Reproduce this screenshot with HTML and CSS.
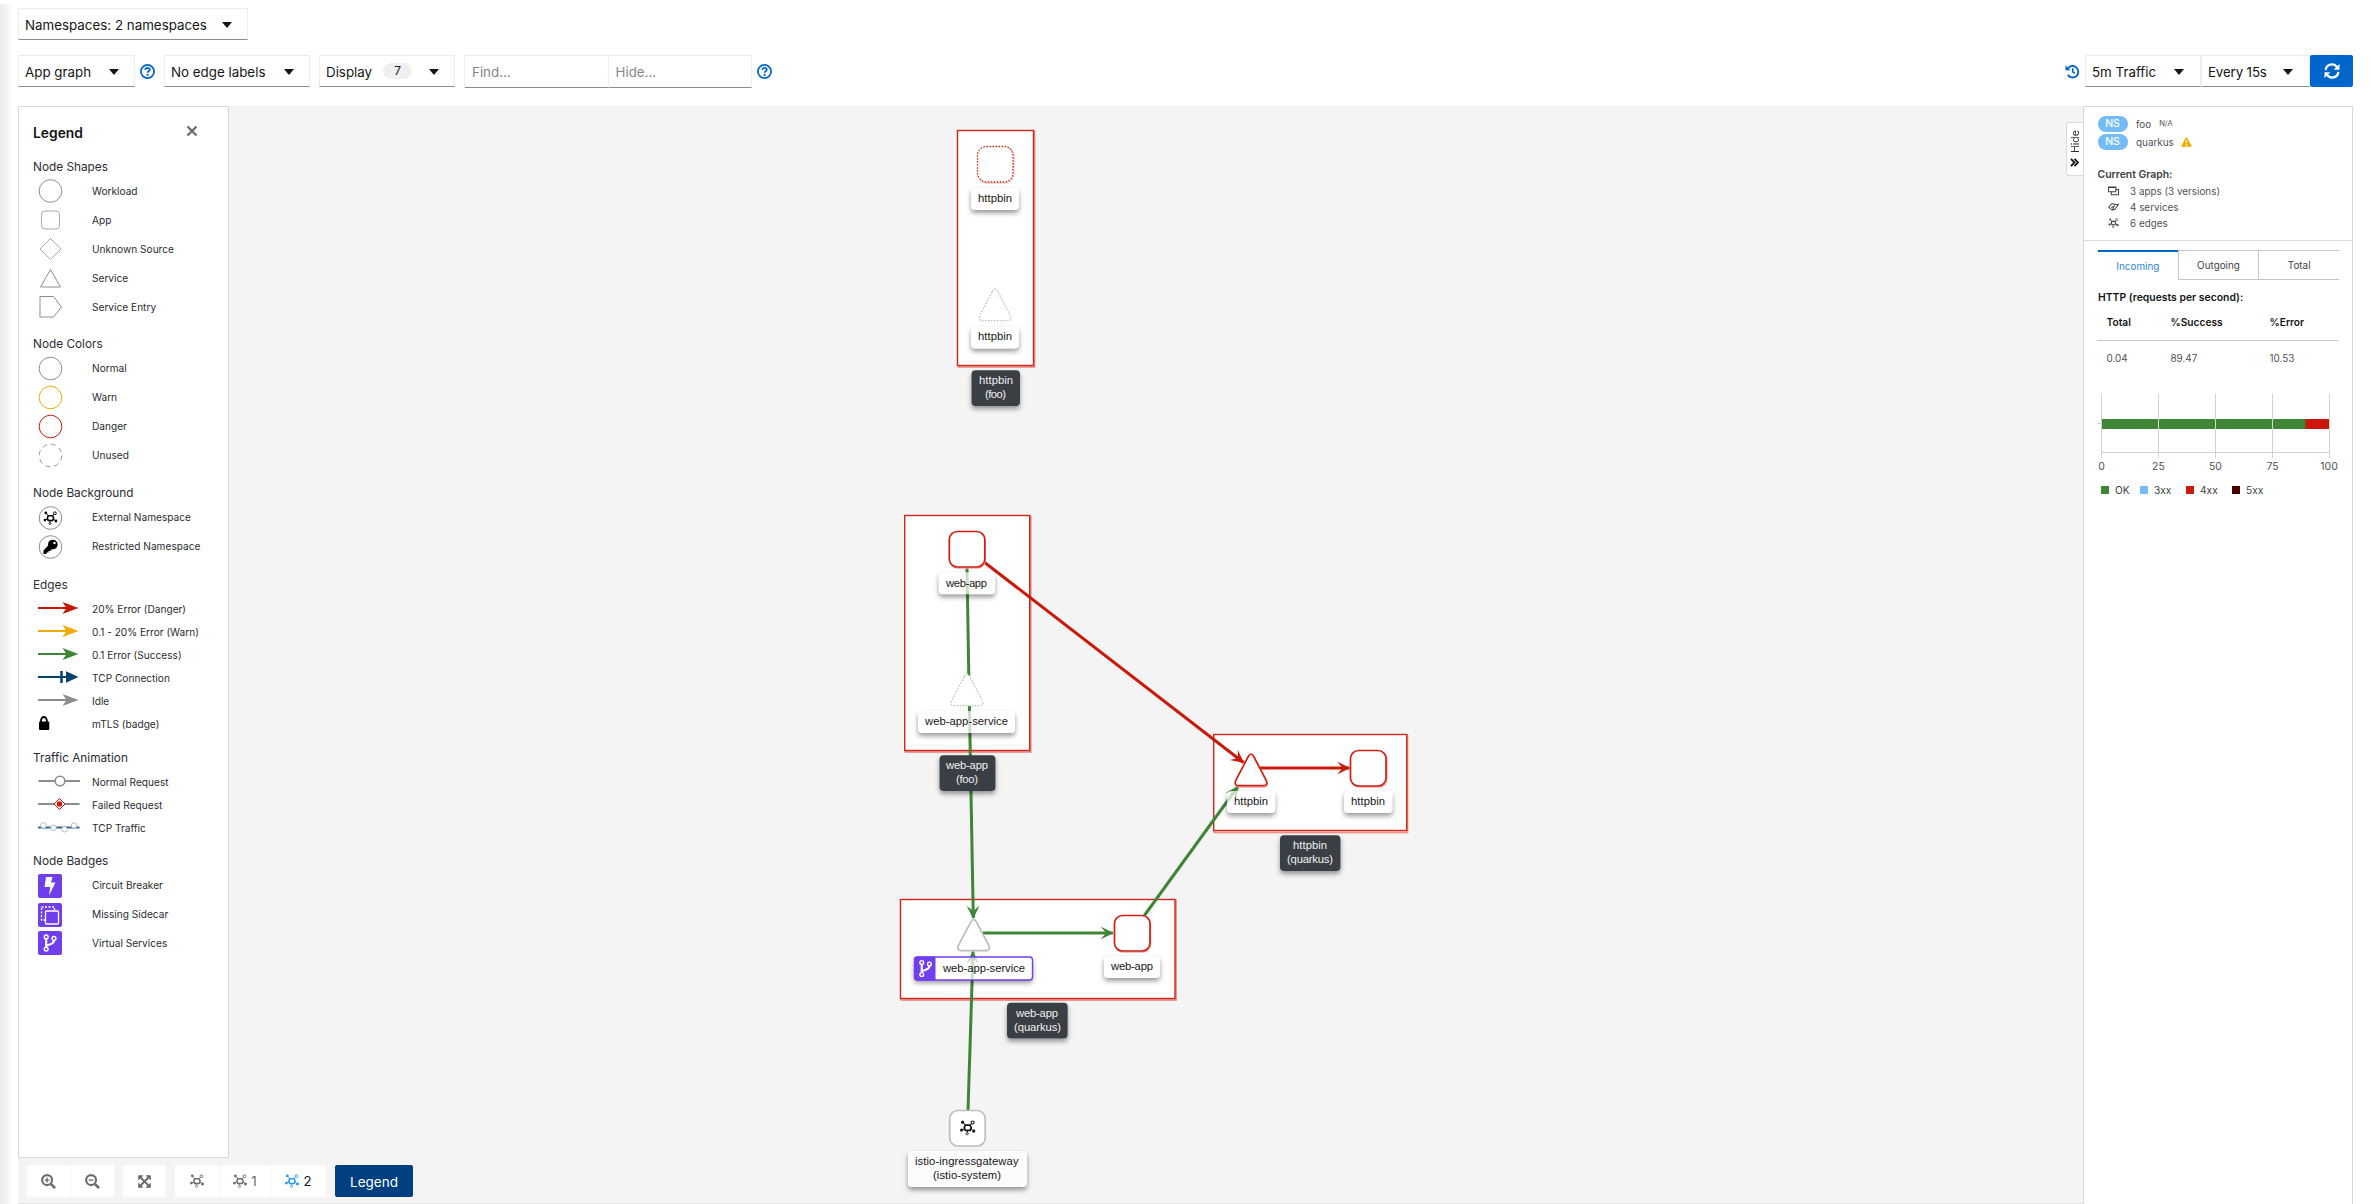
FILE: index.html
```html
<!DOCTYPE html>
<html lang="en">
<head>
<meta charset="utf-8">
<title>Kiali Graph</title>
<link rel="stylesheet" href="styles.css">
</head>
<body>
<svg class="defs" aria-hidden="true">
  <defs>
    <symbol id="topology" viewBox="0 0 16 16">
      <path d="M3.2 2.6 5.8 5.6M12.4 3.4 10.2 5.8M2 10.2 5 9M14 11 11 9.4M7.6 11V13" fill="none" stroke="currentColor" stroke-width="1"/>
      <path d="M5.4 5.4H10.4L11.6 8 10.4 10.8H5.4L4.4 8Z" fill="none" stroke="currentColor" stroke-width="1.8"/>
      <circle cx="2.7" cy="2.2" r="1.6" fill="currentColor"/>
      <circle cx="1.6" cy="10.4" r="1.6" fill="currentColor"/>
      <circle cx="14.3" cy="11.4" r="1.7" fill="currentColor"/>
      <circle cx="13" cy="2.6" r="1.6" fill="none" stroke="currentColor" stroke-width="1.1"/>
      <circle cx="7.4" cy="14.2" r="1.2" fill="none" stroke="currentColor" stroke-width=".9"/>
    </symbol>
    <symbol id="help" viewBox="0 0 16 16">
      <circle cx="8" cy="8" r="7" fill="none" stroke="currentColor" stroke-width="1.9"/>
      <path d="M5.6 6.3C5.8 4.7 6.8 4.1 8 4.1 9.4 4.1 10.4 4.9 10.4 6.1 10.4 7.8 8.1 7.7 8.1 9.4" fill="none" stroke="currentColor" stroke-width="1.9"/>
      <circle cx="8.1" cy="11.7" r="1.2" fill="currentColor"/>
    </symbol>
    <symbol id="branch" viewBox="0 0 16 20">
      <circle cx="4" cy="3.6" r="2" fill="none" stroke="#fff" stroke-width="1.5"/>
      <circle cx="4" cy="16.4" r="2" fill="none" stroke="#fff" stroke-width="1.5"/>
      <circle cx="12.2" cy="5.2" r="2" fill="none" stroke="#fff" stroke-width="1.5"/>
      <path d="M4 5.8V14.2M12.2 7.4C12.2 11.4 7.6 11 4.6 12.8" fill="none" stroke="#fff" stroke-width="2.2"/>
    </symbol>
    <symbol id="arrow" viewBox="0 0 42 14">
      <path d="M0 7H30" stroke="currentColor" stroke-width="2"/>
      <path d="M24.5 1 40.5 7 24.5 13 28.5 7Z" fill="currentColor"/>
    </symbol>
    <marker id="tip-red" viewBox="0 0 12 12" markerWidth="13" markerHeight="14" refX="11.4" refY="6" orient="auto" markerUnits="userSpaceOnUse"><path d="M0 0 12 6 0 12 5 6Z" fill="#c9190b"/></marker>
    <marker id="tip-green" viewBox="0 0 12 12" markerWidth="13" markerHeight="14" refX="11.4" refY="6" orient="auto" markerUnits="userSpaceOnUse"><path d="M0 0 12 6 0 12 5 6Z" fill="#3e8635"/></marker>
    <filter id="lift" x="-20%" y="-30%" width="140%" height="190%">
      <feGaussianBlur in="SourceAlpha" stdDeviation="2.6"/>
      <feOffset dy="3" result="blur"/>
      <feFlood flood-color="#000" flood-opacity=".4"/>
      <feComposite in2="blur" operator="in"/>
      <feComposite in2="SourceAlpha" operator="out"/>
    </filter>
    <g id="light-labels">
      <rect x="971" y="188" width="48" height="22" rx="4"/><rect x="971" y="326.7" width="48" height="21.8" rx="4"/>
      <rect x="938.7" y="572.3" width="56.5" height="22" rx="4"/><rect x="918" y="711" width="97" height="22" rx="4"/>
      <rect x="1227" y="791" width="48.3" height="22" rx="4"/><rect x="1344" y="791" width="48.5" height="22" rx="4"/>
      <rect x="1104" y="956" width="56" height="22" rx="4"/><rect x="908" y="1151" width="119" height="36" rx="4"/>
      <rect x="914" y="957" width="118.5" height="23" rx="3"/>
    </g>
    <g id="dark-labels">
      <rect x="971.5" y="370.3" width="48.5" height="35.7" rx="4"/><rect x="939.5" y="755.3" width="56" height="35.7" rx="4"/>
      <rect x="1280" y="835.3" width="60.5" height="35.7" rx="4"/><rect x="1007" y="1002.7" width="60.7" height="35.7" rx="4"/>
    </g>
  </defs>
</svg>

<header class="toolbar">
  <div class="row">
    <button class="select namespaces">Namespaces: 2 namespaces<i class="caret"></i></button>
  </div>
  <div class="row">
    <button class="select app-graph">App graph<i class="caret"></i></button>
    <svg class="help-icon"><use href="#help"/></svg>
    <button class="select edge-labels">No edge labels<i class="caret"></i></button>
    <button class="select display">Display<span class="count">7</span><i class="caret"></i></button>
    <div class="inputs"><span class="input">Find...</span><span class="input">Hide...</span></div>
    <svg class="help-icon"><use href="#help"/></svg>
    <div class="refresh-group">
      <svg class="history" viewBox="0 0 16 16"><path d="M3.2 4.6A6.1 6.1 0 1 1 3 11.6" fill="none" stroke="currentColor" stroke-width="2"/><path d="M.5 1.2V6.6H6Z" fill="currentColor"/><path d="M8.3 4.6V8.4L10.6 10" fill="none" stroke="currentColor" stroke-width="1.7"/></svg>
      <button class="select duration">5m Traffic<i class="caret"></i></button>
      <button class="select interval">Every 15s<i class="caret"></i></button>
      <button class="refresh"><svg viewBox="0 0 16 16"><path d="M1.6 7A6.2 6.2 0 0 1 13 4.4M14.4 9A6.2 6.2 0 0 1 3 11.6" fill="none" stroke="currentColor" stroke-width="2.2"/><path d="M15.5 1V6.8H9.7ZM.5 15V9.2H6.3Z" fill="currentColor"/></svg></button>
    </div>
  </div>
</header>

<main class="content">
  <section class="graph">
    <svg class="canvas" viewBox="18 106 2065 1097">
      <g class="group-shadow">
        <rect x="958.5" y="131.5" width="76" height="235.5"/><rect x="905.5" y="516.5" width="125.2" height="235.5"/>
        <rect x="1214.5" y="735.5" width="193" height="97"/><rect x="901.5" y="900.5" width="274.5" height="99.5"/>
      </g>
      <g class="group-box">
        <rect x="957.5" y="130.5" width="76" height="235"/><rect x="904.7" y="515.5" width="125" height="235"/>
        <rect x="1213.7" y="734.5" width="193" height="96"/><rect x="900.5" y="899.5" width="274.5" height="99"/>
      </g>
      <g class="edge ok">
        <path d="M967 567 968.8 676"/>
        <path d="M969.4 706 973.3 918" marker-end="url(#tip-green)"/>
        <path d="M983 933H1113" marker-end="url(#tip-green)"/>
        <path d="M1144 916 1238 786.5" marker-end="url(#tip-green)"/>
        <path d="M968 1111 973 951.5" marker-end="url(#tip-green)"/>
      </g>
      <g class="edge danger">
        <path d="M984 562 1243.5 762.5" marker-end="url(#tip-red)"/>
        <path d="M1260 768H1349.5" marker-end="url(#tip-red)"/>
      </g>
      <g class="node-shadow">
        <rect x="978.5" y="147.5" width="35.5" height="35.5" rx="9" class="dotted"/>
        <rect x="949.7" y="532.5" width="35.5" height="35.5" rx="8"/>
        <rect x="1351.5" y="751.5" width="35.5" height="35.5" rx="8"/>
        <rect x="1115" y="916.5" width="35.5" height="35.5" rx="8"/>
        <path d="M1253.5 756 1267 782Q1268 787 1264 787H1240Q1235 787 1237 782L1249.500 757"/>
      </g>
      <g class="node danger">
        <rect x="977.5" y="146.5" width="35.5" height="35.5" rx="9" class="dotted"/>
        <rect x="949.3" y="531.5" width="35.5" height="35.5" rx="8"/>
        <rect x="1350.5" y="750.5" width="35.5" height="35.5" rx="8"/>
        <rect x="1114.5" y="915.5" width="35.5" height="35.5" rx="8"/>
        <path d="M1248.3 756.5Q1251 751.5 1253.700 756.5L1266.3 780.5Q1268 785.7 1263.5 785.7H1238.5Q1234 785.7 1235.7 780.5Z"/>
      </g>
      <g class="node idle">
        <path class="dotted" d="M992.3 291.5Q995 286.5 997.7 291.5L1010.3 315.5Q1012 320.7 1007.5 320.7H982.5Q978 320.7 979.7 315.5Z"/>
        <path class="dotted" d="M964.3 676.5Q967 671.5 969.7 676.5L982.3 700.5Q984 705.7 979.5 705.7H954.5Q950 705.7 951.7 700.5Z"/>
        <path d="M970.9 921.8Q973.6 916.8 976.3 921.8L988.9 945.5Q990.6 950.7 986.1 950.7H961.1Q956.6 950.7 958.3 945.5Z"/>
        <rect x="949.7" y="1110.5" width="35.5" height="35.5" rx="8"/>
      </g>
      <use href="#topology" x="960" y="1120" width="15.5" height="15.5" color="#151515"/>
      <use href="#light-labels" filter="url(#lift)"/>
      <use href="#light-labels" class="label-bg"/>
      <use href="#dark-labels" filter="url(#lift)"/>
      <use href="#dark-labels" class="label-dark"/>
      <rect x="914.5" y="957" width="118" height="23" rx="3" fill="none" stroke="#703ff0" stroke-width="1.4"/>
      <path d="M917 956.5H935.5V980.5H917Q914 980.5 914 977.5V959.5Q914 956.5 917 956.5Z" fill="#703fec"/>
      <use href="#branch" x="918" y="959" width="15" height="19"/>
      <g class="label">
        <text x="978" y="202" textLength="34">httpbin</text>
        <text x="978" y="340" textLength="34">httpbin</text>
        <text x="946" y="587" textLength="41">web-app</text>
        <text x="925" y="725" textLength="83">web-app-service</text>
        <text x="1234" y="805" textLength="34">httpbin</text>
        <text x="1351" y="805" textLength="34">httpbin</text>
        <text x="943" y="972" textLength="82">web-app-service</text>
        <text x="1111" y="970" textLength="42">web-app</text>
        <text x="915" y="1165" textLength="103.5">istio-ingressgateway</text>
        <text x="933" y="1179" textLength="68">(istio-system)</text>
      </g>
      <g class="label light">
        <text x="979" y="384" textLength="34">httpbin</text><text x="985" y="398" textLength="21">(foo)</text>
        <text x="946" y="769" textLength="42">web-app</text><text x="956" y="783" textLength="22">(foo)</text>
        <text x="1293" y="849" textLength="34">httpbin</text><text x="1287" y="863" textLength="46">(quarkus)</text>
        <text x="1016" y="1017" textLength="42">web-app</text><text x="1014" y="1031" textLength="47">(quarkus)</text>
      </g>
    </svg>

    <aside class="legend">
      <div class="legend-title"><h2>Legend</h2><svg viewBox="0 0 12 12" class="close"><path d="M1.5 1.5 10.5 10.5M10.5 1.5 1.5 10.5"/></svg></div>
      <div class="legend-body">
        <section>
          <h3>Node Shapes</h3>
          <div class="item"><svg class="shape"><circle cx="12.5" cy="13" r="11.3"/></svg>Workload</div>
          <div class="item"><svg class="shape light"><rect x="3.5" y="4" width="18" height="18" rx="3.5"/></svg>App</div>
          <div class="item"><svg class="shape light"><path d="M12.5 2.5 23 13 12.5 23.5 2 13Z"/></svg>Unknown Source</div>
          <div class="item"><svg class="shape"><path d="M12.5 4.5 22.5 22H2.5Z"/></svg>Service</div>
          <div class="item"><svg class="shape"><path d="M2 2.5H15.5L23.5 13 15.500 23H2Z"/></svg>Service Entry</div>
        </section>
        <section>
          <h3>Node Colors</h3>
          <div class="item"><svg class="shape"><circle cx="12.5" cy="13.5" r="11.3"/></svg>Normal</div>
          <div class="item"><svg class="shape warn"><circle cx="12.5" cy="13.5" r="11.3"/></svg>Warn</div>
          <div class="item"><svg class="shape danger"><circle cx="12.5" cy="13.5" r="11.3"/></svg>Danger</div>
          <div class="item"><svg class="shape unused"><circle cx="12.5" cy="13.5" r="11.3"/></svg>Unused</div>
        </section>
        <section>
          <h3>Node Background</h3>
          <div class="item"><svg class="shape"><circle cx="12.5" cy="14" r="11.3"/><use href="#topology" x="5.5" y="7" width="14" height="14" color="#000" class="mark"/></svg>External Namespace</div>
          <div class="item"><svg class="shape"><circle cx="12.5" cy="14" r="11.3"/><g class="mark" transform="translate(0 .5)"><circle cx="14.8" cy="11" r="4.8" fill="#000"/><path d="M11.5 10.5 15.5 14.5 12 17.5H10.5V19H8.5V20.5H5.5V17Z" fill="#000"/><circle cx="16.5" cy="9.5" r="1.2" fill="#fff"/></g></svg>Restricted Namespace</div>
        </section>
        <section class="compact">
          <h3>Edges</h3>
          <div class="item"><svg class="line red"><use href="#arrow" width="42" height="14"/></svg>20% Error (Danger)</div>
          <div class="item"><svg class="line amber"><use href="#arrow" width="42" height="14"/></svg>0.1 - 20% Error (Warn)</div>
          <div class="item"><svg class="line green"><use href="#arrow" width="42" height="14"/></svg>0.1 Error (Success)</div>
          <div class="item"><svg class="line navy"><path d="M0 7H30" stroke="currentColor" stroke-width="2"/><path d="M23.5 1V13" stroke="currentColor" stroke-width="2.5"/><path d="M28 1.2 40.5 7 28 12.8Z" fill="currentColor"/></svg>TCP Connection</div>
          <div class="item"><svg class="line gray"><use href="#arrow" width="42" height="14"/></svg>Idle</div>
          <div class="item"><svg class="line"><path d="M3 6V4.5A2.9 3.5 0 0 1 8.8 4.5V6" fill="none" stroke="#000" stroke-width="1.8"/><rect x="1" y="5.5" width="10.3" height="8.5" rx="1" fill="#000"/></svg>mTLS (badge)</div>
        </section>
        <section class="compact">
          <h3>Traffic Animation</h3>
          <div class="item"><svg class="line gray"><path d="M.5 7H42" stroke="currentColor" stroke-width="2"/><circle cx="22" cy="7" r="4.8" fill="#fff" stroke="currentColor" stroke-width="1.5"/></svg>Normal Request</div>
          <div class="item"><svg class="line gray"><path d="M0 7H41.5" stroke="currentColor" stroke-width="2"/><path d="M21.5 1.5 27 7 21.5 12.5 16 7Z" fill="#fff" stroke="#c9190b"/><circle cx="21.5" cy="7" r="2.7" fill="#c9190b"/></svg>Failed Request</div>
          <div class="item"><svg class="line"><path d="M0 7.5H41.5" stroke="#2b6a94" stroke-width="2"/><g fill="#fff" stroke="#aaa" stroke-width=".8"><circle cx="5.5" cy="5.5" r="2.8"/><circle cx="15.5" cy="7.8" r="2.8"/><circle cx="26.5" cy="9.3" r="2.8"/><circle cx="36" cy="5.5" r="2.8"/></g></svg>TCP Traffic</div>
        </section>
        <section>
          <h3>Node Badges</h3>
          <div class="item"><svg class="badge"><path d="M8 3H14.5L13 8.5H17.5L11 21.5 12.2 13H6.5Z" fill="#fff"/></svg>Circuit Breaker</div>
          <div class="item"><svg class="badge"><rect x="3.5" y="4" width="13" height="13" fill="none" stroke="#fff" stroke-width="1.3" stroke-dasharray="2 1.5"/><rect x="7.5" y="8" width="13" height="13" rx="1" fill="#703fec" stroke="#fff" stroke-width="1.3"/></svg>Missing Sidecar</div>
          <div class="item"><svg class="badge"><use href="#branch" x="4" y="2.5" width="16" height="19"/></svg>Virtual Services</div>
        </section>
      </div>
    </aside>

    <div class="graph-tools">
      <div class="tool-group">
        <button class="tool"><svg viewBox="0 0 16 16"><circle cx="6.500" cy="6.500" r="5.300"/><path d="M10.500 10.500 15 15" stroke-width="2.800"/><path d="M6.500 4V9M4 6.500H9" stroke-width="1.500"/></svg></button>
        <button class="tool"><svg viewBox="0 0 16 16"><circle cx="6.500" cy="6.500" r="5.300"/><path d="M10.500 10.500 15 15" stroke-width="2.800"/><path d="M4 6.500H9" stroke-width="1.500"/></svg></button>
      </div>
      <button class="tool"><svg viewBox="0 0 16 16" class="fit"><path d="M3 3 13 13M13 3 3 13" stroke-width="2.200"/><path d="M1.800 6V1.800H6ZM10 1.800H14.200V6ZM14.200 10V14.200H10ZM6 14.200H1.800V10Z" fill="currentColor" stroke-width="1"/></svg></button>
      <div class="tool-group layouts">
        <button class="tool"><svg class="topo"><use href="#topology"/></svg></button>
        <button class="tool one"><svg class="topo"><use href="#topology"/></svg>1</button>
        <button class="tool two"><svg class="topo"><use href="#topology"/></svg>2</button>
      </div>
      <button class="legend-button">Legend</button>
    </div>
    <button class="hide-tab"><svg viewBox="0 0 10 10"><path d="M1 1 5 5 9 1M1 5 5 9 9 5"/></svg>Hide</button>
  </section>

  <aside class="summary">
    <div class="overview">
      <div class="ns"><b>NS</b><span>foo</span><small>N/A</small></div>
      <div class="ns"><b>NS</b><span>quarkus</span><svg viewBox="0 0 12 11"><path d="M6 .3Q6.500.3 6.900 1L11.600 9.600Q12 10.700 11 10.700H1Q0 10.700.4 9.600L5.100 1Q5.500.3 6 .3Z" fill="#f0ab00"/><path d="M6 3.500V7M6 8V9.500" stroke="#fff" stroke-width="1.500"/></svg></div>
      <h4>Current Graph:</h4>
      <div class="stat"><svg viewBox="0 0 12 10"><path d="M.6.6H8.600V5.800H.6ZM3.600 6V9.200H11.400V3.400H8.800M.6 1.300H8.600"/></svg>3 apps (3 versions)</div>
      <div class="stat"><svg viewBox="0 0 12 10"><path d="M3 2.500Q5.500.3 8 2.500L11.500 2 9 5.500Q8 8.500 4.500 8.300L.8 5.300 3 2.500M3.500 5.500 6.500 4.500M5 8.200 7 3"/></svg>4 services</div>
      <div class="stat"><svg class="edges"><use href="#topology"/></svg>6 edges</div>
    </div>
    <nav class="tabs"><span class="active">Incoming</span><span>Outgoing</span><span>Total</span></nav>
    <h4 class="http">HTTP (requests per second):</h4>
    <div class="table head"><span>Total</span><span>%Success</span><span>%Error</span></div>
    <div class="table"><span>0.04</span><span>89.47</span><span>10.53</span></div>
    <svg class="chart" viewBox="0 0 255 80" role="img">
      <rect x="6" y="25" width="204" height="10" fill="#3e8635"/><rect x="209.500" y="25" width="24" height="10" fill="#c9190b"/>
      <path d="M1 29.500H5.500" stroke="#d2d2d2"/>
      <path d="M5.500 0V64M62.500 0V64M119.500 0V64M176.500 0V64M233.500 0V64M5.500 58.500H233.500" stroke="#d2d2d2" fill="none"/>
      <text x="5.500" y="76">0</text><text x="62.500" y="76">25</text><text x="119.500" y="76">50</text><text x="176.500" y="76">75</text><text x="233" y="76">100</text>
    </svg>
    <div class="series"><span class="s-ok">OK</span><span class="s-3">3xx</span><span class="s-4">4xx</span><span class="s-5">5xx</span></div>
  </aside>
</main>
</body>
</html>
```
FILE: styles.css
```css
* { box-sizing: border-box; }
body {
  margin: 0; width: 2371px; height: 1204px; overflow: hidden;
  padding: 8px 18px 0;
  display: flex; flex-direction: column;
  background: linear-gradient(90deg, #ebebeb 0, #f3f3f3 6px, #fcfcfc 12px, #fff 17px) no-repeat 0 4px / 18px 100%, #fff;
  color: #151515; font: 13.35px Inter, sans-serif;
}
.defs { position: absolute; width: 0; height: 0; }
h2, h3, h4 { margin: 0; }
button { font: inherit; color: inherit; border: 0; padding: 0; margin: 0; background: none; }
svg { display: block; flex: none; }

.toolbar { flex: none; height: 98px; display: flex; flex-direction: column; gap: 15px; }
.row { height: 32px; display: flex; align-items: center; }
.select {
  height: 32px; display: flex; align-items: center; flex: none;
  padding: 2px 14px 0 6px; background: #fff; white-space: nowrap;
  border: 1px solid #ededed; border-bottom-color: #8a8d90;
}
.caret { margin-left: auto; border: 5px solid transparent; border-top: 6px solid #151515; border-bottom: 0; }
.namespaces { width: 230px; padding-right: 15px; }
.app-graph { width: 117px; padding-right: 15px; }
.edge-labels { width: 146px; padding-right: 15px; }
.display { width: 136px; padding-right: 15px; margin-left: 9px; }
.count { margin-left: 11px; margin-top: -2px; width: 29px; height: 16px; border-radius: 8px; background: #f0f0f0; font-size: 12px; line-height: 16px; text-align: center; }
.help-icon { width: 15px; height: 15px; margin: 0 9px 0 5px; color: #06c; }
.inputs { display: flex; height: 33px; margin: 1px 0 0 9px; border-left: 1px solid #ededed; }
.input { width: 143.5px; padding: 8px 7px; border: 1px solid #ededed; border-left: 0; border-bottom-color: #8a8d90; color: #83868a; line-height: 17px; }
.refresh-group { margin-left: auto; display: flex; align-items: center; }
.history { width: 15px; height: 15px; margin-right: 5px; color: #06c; }
.duration { width: 116px; }
.interval { width: 109px; }
.duration, .interval { padding-right: 16px; }
.interval { letter-spacing: -.15px; }
.refresh { width: 43px; height: 32px; border-radius: 2px; background: #06c; color: #fff; display: grid; place-items: center; }
.refresh svg { width: 16px; height: 16px; }

.content { height: 1098px; display: flex; }
.graph { position: relative; flex: 1; background: #f4f4f4; display: flex; flex-direction: column; border-bottom: 1px solid #e4e4e4; }
.canvas { position: absolute; left: 0; top: 0; width: 2065px; height: 1097px; }
.group-box { fill: #fff; stroke: #d42418; stroke-width: 1.4; }
.group-shadow { fill: none; stroke: #e9938c; stroke-width: 1.8; }
.edge { fill: none; stroke-width: 3; }
.edge.ok { stroke: #3e8635; }
.edge.danger { stroke: #c9190b; }
.node { fill: #fff; stroke-width: 1.7; }
.node.danger { stroke: #cf2014; }
.node.idle { stroke: #bdbdbd; }
.node-shadow { fill: none; stroke: #eda59f; stroke-width: 1.5; }
.dotted { stroke-dasharray: 1.5 1.5; stroke-width: 1.3; }
.label-bg { fill: #fff; fill-opacity: .72; }
.label-dark { fill: #3a3f45; }
.label text { font: 11.25px "Liberation Sans", Arial, sans-serif; fill: #151515; }
.label.light text { fill: #f0f0f0; }

.legend { position: relative; width: 211px; height: 1052px; background: #fff; border: 1px solid #d9d9d9; font-size: 10.15px; color: #2b2d30; }
.legend-title { height: 50px; display: flex; align-items: center; padding: 1px 30px 0 14px; }
.legend-title h2 { font-size: 13.85px; font-weight: 600; color: #151515; }
.close { width: 12px; height: 12px; margin: -3px 0 0 auto; fill: none; stroke: #6a6e73; stroke-width: 2.4; }
.legend-body { padding-left: 14px; display: grid; grid-template-rows: 177px 149px 92px 173px 103px 110px; }
.legend h3 { font-size: 11.8px; font-weight: 400; line-height: 20px; }
.item { height: 28.8px; display: flex; align-items: center; }
.shape { width: 25px; height: 26px; margin: 0 29.5px 0 4.5px; fill: #fff; stroke: #8b8d8f; stroke-width: 1; }
.shape.light { stroke: #a9abad; }
.shape.warn { stroke: #f0ab00; }
.shape.danger { stroke: #c9190b; }
.shape.unused { stroke: #999; stroke-dasharray: 5 3.88; }
.mark { stroke: none; }
.compact .item { height: 23px; }
.compact h3 + .item { margin-top: 2.5px; }
.line { width: 42px; height: 14px; margin: -3px 12px 0 5px; }
.line.red { color: #c9190b; } .line.amber { color: #f0ab00; } .line.green { color: #3e8635; }
.line.navy { color: #004368; } .line.gray { color: #8b8d8f; }
.badge { width: 24px; height: 24px; margin: 1px 30px 0 5px; border-radius: 2px; background: #703fec; }

.graph-tools { position: relative; display: flex; gap: 9px; padding: 7px 0 0 9px; }
.tool-group { display: flex; gap: 1px; }
.tool { width: 43px; height: 32px; border-radius: 2px; background: #fff; display: flex; align-items: center; justify-content: center; gap: 4px; color: #6a6e73; }
.tool svg { width: 15px; height: 15px; fill: none; stroke: currentColor; stroke-width: 2.3; }
.tool .fit { width: 15px; height: 15px; }
.tool .topo { width: 14px; height: 14px; stroke: none; }
.layouts .tool { width: 44px; }
.layouts .one { width: 50px; }
.layouts .two { width: 55px; color: #151515; }
.two .topo { color: #2b9af3; }
.legend-button { width: 78px; height: 32px; border-radius: 2px; background: #004080; color: #fff; font-size: 13.5px; padding-top: 2px; }
.hide-tab {
  position: absolute; right: 0; top: 16px; width: 17px; height: 54px;
  display: flex; align-items: center; justify-content: center; gap: 5px;
  writing-mode: vertical-rl; transform: rotate(180deg);
  background: #fff; border: 1px solid #d9d9d9; border-left: 0; border-radius: 0 3px 3px 0; font-size: 10.5px; color: #2b2d30;
}
.hide-tab svg { width: 9px; height: 9px; fill: none; stroke: #151515; stroke-width: 2; transform: rotate(90deg); }

.summary { width: 270px; background: #fff; border: 1px solid #d9d9d9; border-bottom: 0; font-size: 9.9px; color: #4f5255; }
.overview { height: 134px; padding: 7.5px 0 0 13.5px; border-bottom: 1px solid #d9d9d9; }
.ns { height: 18px; display: flex; align-items: center; font-size: 9.9px; }
.ns b { width: 30px; height: 16px; margin-right: 8.5px; border-radius: 8px; background: #73bcf7; color: #fff; font-size: 10.5px; font-weight: 500; line-height: 16px; text-align: center; }
.ns small { margin-left: 8px; font-size: 7.5px; }
.ns svg { width: 11px; height: 10px; margin-left: 7px; }
.summary h4 { font-size: 10.4px; font-weight: 600; color: #151515; }
.overview h4 { height: 16px; margin-top: 16.5px; line-height: 16px; color: #3c3f42; }
.stat { height: 16px; display: flex; align-items: center; }
.stat svg { width: 11px; height: 10px; margin: 0 11px 0 10.5px; fill: none; stroke: #3c3f42; stroke-width: 1.1; }
.stat .edges { stroke: none; color: #3c3f42; }
.tabs { display: flex; margin: 9px 13px 0 14px; height: 30px; }
.tabs span { flex: 1; display: grid; place-items: center; border: 1px solid #c7c7c7; border-right: 0; color: #3c3f42; }
.tabs .active { border: 0; border-top: 2px solid #06c; color: #2b86e0; }
.http { margin: 10px 0 0 14px; height: 16px; line-height: 16px; }
.table { display: grid; grid-template-columns: 64px 99px 1fr; align-items: center; height: 34px; margin: 0 14px 0 13px; padding-left: 9.5px; }
.table.head { height: 35px; font-size: 10.2px; font-weight: 600; color: #151515; border-bottom: 1px solid #c7c7c7; padding-bottom: 3px; }
.chart { width: 255px; height: 80px; margin: 19px 0 0 12px; }
.chart text { font: 10.5px Inter, sans-serif; fill: #4f5255; text-anchor: middle; }
.series { display: flex; margin: 9px 0 0 17px; font-size: 10.2px; line-height: 14px; color: #3c3f42; }
.series span { width: 46px; display: flex; align-items: center; gap: 6px; }
.series span::before { content: ""; width: 8px; height: 8px; background: #3e8635; }
.series .s-ok { width: 39px; }
.series .s-3::before { background: #73bcf7; } .series .s-4::before { background: #c9190b; } .series .s-5::before { background: #470000; }
```
